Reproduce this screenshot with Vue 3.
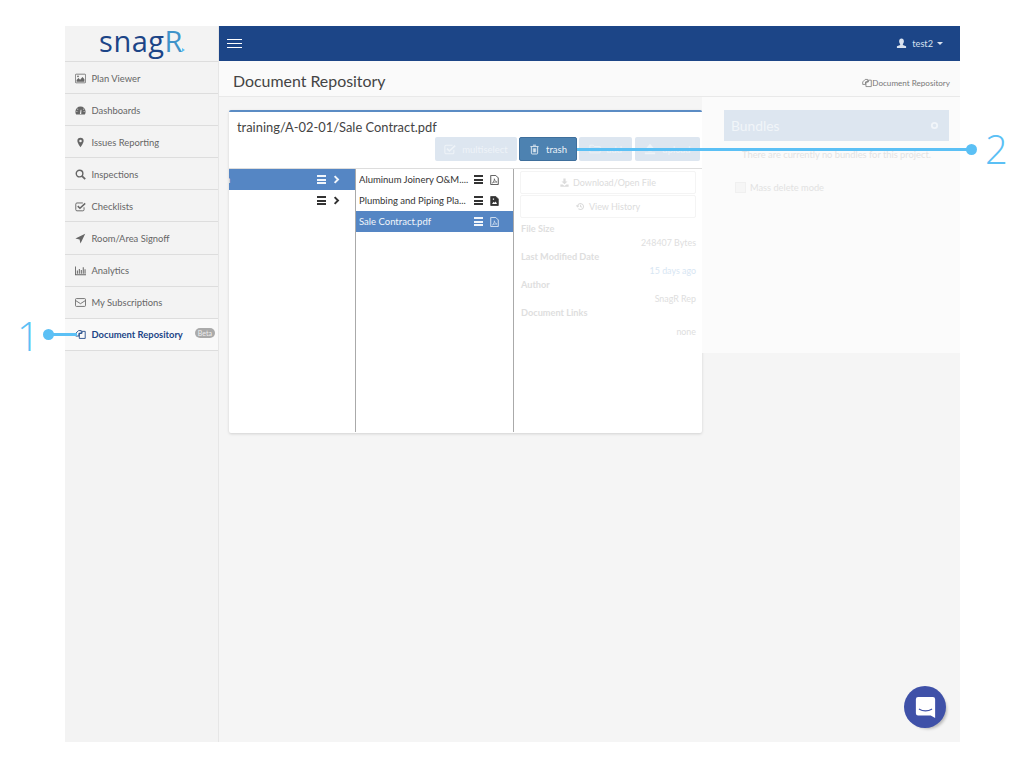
<script setup lang="ts">
const navItems = [
  { label: 'Plan Viewer', icon: 'image' },
  { label: 'Dashboards', icon: 'gauge' },
  { label: 'Issues Reporting', icon: 'pin' },
  { label: 'Inspections', icon: 'search' },
  { label: 'Checklists', icon: 'check' },
  { label: 'Room/Area Signoff', icon: 'arrow' },
  { label: 'Analytics', icon: 'chart' },
  { label: 'My Subscriptions', icon: 'mail' },
  { label: 'Document Repository', icon: 'docs', active: true, badge: 'Beta' },
]

const files = [
  { name: 'Aluminum Joinery O&M....', icon: 'pdf' },
  { name: 'Plumbing and Piping Pla...', icon: 'imgfile' },
  { name: 'Sale Contract.pdf', icon: 'pdf', active: true },
]

const details = [
  { label: 'File Size', value: '248407 Bytes' },
  { label: 'Last Modified Date', value: '15 days ago', recent: true },
  { label: 'Author', value: 'SnagR Rep' },
  { label: 'Document Links', value: 'none' },
]
</script>

<template>
  <div class="page">
    <div class="app">
      <aside class="sidebar">
        <div class="logo"><span class="logo__snag">snag</span><span class="logo__r">R</span><i class="logo__tip" /></div>
        <nav>
          <a v-for="item in navItems" :key="item.label" class="nav-item" :class="{ 'nav-item--active': item.active }">
            <svg class="nav-icon" viewBox="0 0 14 14">
              <g v-if="item.icon === 'image'"><rect x="0.5" y="1.5" width="13" height="11" rx="1" fill="none" stroke="currentColor" /><path d="M2 11V9l2.5-2.5L6.5 8.5 9.5 5 12 8v3z" fill="currentColor" /><circle cx="3.8" cy="4.2" r="1.1" fill="currentColor" /></g>
              <path v-else-if="item.icon === 'gauge'" d="M7 2a6.5 6.5 0 0 0-6.5 6.5c0 1.3.3 2.4 1 3.5h11c.7-1.1 1-2.2 1-3.5A6.5 6.5 0 0 0 7 2zM6.2 11.500l1-5.5 1 .2-.3 5.3zM3 9H1.800V8H3zM4.300 5.500l-1 .7-.6-.9.9-.7zM12.200 9H11V8h1.200zM11.300 6.200l-1-.7.7-.9.9.7z" fill="currentColor" fill-rule="evenodd" />
              <path v-else-if="item.icon === 'pin'" d="M7 1a4 4 0 0 0-4 4c0 2.500 4 8 4 8s4-5.500 4-8a4 4 0 0 0-4-4zm0 5.600A1.600 1.600 0 1 1 7 3.400a1.600 1.600 0 0 1 0 3.200z" fill="currentColor" fill-rule="evenodd" />
              <g v-else-if="item.icon === 'search'" fill="none" stroke="currentColor"><circle cx="5.800" cy="5.800" r="4.200" stroke-width="1.800" /><path d="M9 9l4 4" stroke-width="2.200" /></g>
              <g v-else-if="item.icon === 'check'" fill="none" stroke="currentColor"><path d="M11.500 8v3a1.500 1.500 0 0 1-1.500 1.500H2.500A1.500 1.500 0 0 1 1 11V4a1.500 1.500 0 0 1 1.500-1.500H10" stroke-width="1.200" /><path d="M3.500 6.500L6.300 9.300 13 3" stroke-width="1.900" /></g>
              <path v-else-if="item.icon === 'arrow'" d="M13 1L7 13.500 5.800 8.200.5 7z" fill="currentColor" />
              <path v-else-if="item.icon === 'chart'" d="M.5 2v10.500H14M3 7v4M5.500 5v6M8 6.500V11M10.500 3v8M12.800 5.500V11" fill="none" stroke="currentColor" stroke-width="1.300" />
              <g v-else-if="item.icon === 'mail'" fill="none" stroke="currentColor" stroke-width="1.100"><rect x="0.600" y="2" width="12.800" height="10" rx="1.300" /><path d="M.8 4.500L7 8.500l6.200-4" /></g>
              <g v-else fill="none" stroke="currentColor" stroke-width="1.100"><path d="M1 5.500L4.500 2H8v3.500H5V9H1z" /><path d="M5.500 5.500H9V3h4v9H5.500z" /></g>
            </svg>
            <span class="nav-label">{{ item.label }}</span>
            <em v-if="item.badge" class="nav-badge">{{ item.badge }}</em>
          </a>
        </nav>
      </aside>

      <div class="main">
        <header class="topbar">
          <div class="burger"><i /><i /><i /></div>
          <div class="user">
            <svg class="user__icon" viewBox="0 0 12 12"><path d="M6 .5c1.700 0 2.600 1.300 2.600 3 0 1.200-.5 2.300-1.100 3v1l3.500 1.500v2H1v-2l3.500-1.500v-1c-.6-.7-1.100-1.800-1.100-3 0-1.700.9-3 2.600-3z" fill="currentColor" /></svg>
            <span>test2</span>
            <i class="user__caret" />
          </div>
        </header>

        <div class="subhead">
          <h1>Document Repository</h1>
          <div class="crumb">
            <svg class="crumb__icon" viewBox="0 0 14 14"><g fill="none" stroke="currentColor" stroke-width="1.100"><path d="M1 5.500L4.500 2H8v3.500H5V9H1z" /><path d="M5.500 5.500H9V3h4v9H5.500z" /></g></svg>
            Document Repository
          </div>
        </div>

        <div class="content">
          <section class="browser">
            <div class="browser__head">
              <h2>training/A-02-01/Sale Contract.pdf</h2>
              <div class="toolbar">
                <button class="btn btn--w82" type="button">
                  <svg class="btn__icon" viewBox="0 0 14 14"><g fill="none" stroke="currentColor"><path d="M11.500 8v3a1.500 1.500 0 0 1-1.500 1.500H2.500A1.500 1.500 0 0 1 1 11V4a1.500 1.500 0 0 1 1.500-1.500H10" stroke-width="1.200" /><path d="M3.500 6.500L6.300 9.300 13 3" stroke-width="1.900" /></g></svg>
                  multiselect
                </button>
                <button class="btn btn--trash" type="button">
                  <svg class="btn__icon btn__icon--small" viewBox="0 0 14 14"><path d="M5 1.500h4M1.800 3.300h10.400M3 3.500v8.200c0 .7.400 1 1 1h6c.6 0 1-.3 1-1V3.500M5.500 5.500v5M7 5.500v5M8.500 5.500v5" fill="none" stroke="currentColor" stroke-width="1.100" /></svg>
                  trash
                </button>
                <button class="btn btn--w53" type="button">
                  <svg class="btn__icon" viewBox="0 0 14 14"><path d="M1 11.500v-9h4l1.300 1.500H13v7.500z" fill="none" stroke="currentColor" /></svg>
                  add
                </button>
                <button class="btn btn--w65" type="button">
                  <svg class="btn__icon" viewBox="0 0 14 14"><path d="M7 1L2.500 6H5v4h4V6h2.500zM1 11h12v2H1z" fill="currentColor" /></svg>
                  upload
                </button>
              </div>
            </div>

            <div class="columns">
              <div class="col col--folders">
                <div class="row row--active">
                  <span class="row__name row__name--clip">n</span>
                  <span class="lines"><i /><i /><i /></span>
                  <svg class="chev" viewBox="0 0 8 12"><path d="M1.500 1.500L6 6l-4.500 4.500" fill="none" stroke="currentColor" stroke-width="2.600" /></svg>
                </div>
                <div class="row">
                  <span class="row__name" />
                  <span class="lines"><i /><i /><i /></span>
                  <svg class="chev" viewBox="0 0 8 12"><path d="M1.500 1.500L6 6l-4.500 4.500" fill="none" stroke="currentColor" stroke-width="2.600" /></svg>
                </div>
              </div>

              <div class="col col--files">
                <div v-for="file in files" :key="file.name" class="row row--file" :class="{ 'row--active': file.active }">
                  <span class="row__name">{{ file.name }}</span>
                  <span class="lines"><i /><i /><i /></span>
                  <svg class="file-icon" viewBox="0 0 10 12">
                    <path d="M1 .5h5.500L9.500 3.500v8H.5V.5z" :fill="file.icon === 'imgfile' ? 'currentColor' : 'none'" stroke="currentColor" />
                    <path v-if="file.icon === 'pdf'" d="M2.500 9.500C4 8.500 5 6 4.800 4.500c.5 2 1.500 3.500 3 4-1.500-.2-3.500 0-5.300 1z" fill="none" stroke="currentColor" stroke-width="0.700" />
                    <path v-else d="M2 9.500l2-2.500 1.300 1.200L6.500 6.500 8 9.500zM3 3h1.500v1.500H3z" fill="#fff" />
                  </svg>
                </div>
              </div>

              <div class="col col--detail">
                <div class="ghost-btn">
                  <svg class="ghost-icon" viewBox="0 0 12 12"><path d="M4.500 .5h3v4H10L6 8.300 2 4.500h2.500zM.5 8.500h3L6 10.500l2.500-2h3v3H.5z" fill="currentColor" /></svg>
                  Download/Open File
                </div>
                <div class="ghost-btn">
                  <svg class="ghost-icon" viewBox="0 0 12 12"><path d="M2 6a4 4 0 1 1 1.200 2.900M6 3.500V6l1.800 1M.5 4.500L2 6.300 3.800 5" fill="none" stroke="currentColor" stroke-width="1.400" /></svg>
                  View History
                </div>
                <dl class="meta">
                  <template v-for="d in details" :key="d.label">
                    <dt>{{ d.label }}</dt>
                    <dd :class="{ recent: d.recent }">{{ d.value }}</dd>
                  </template>
                </dl>
              </div>
            </div>
          </section>

          <section class="bundles">
            <div class="bundles__head">
              <span>Bundles</span>
              <svg class="bundles__plus" viewBox="0 0 10 10"><circle cx="5" cy="5" r="3" fill="none" stroke="currentColor" stroke-width="2" /></svg>
            </div>
            <p class="bundles__empty">There are currently no bundles for this project.</p>
            <label class="mass"><i class="mass__box" />Mass delete mode</label>
          </section>
        </div>
      </div>
    </div>

    <div class="callout callout--one">
      <span class="callout__num">1</span><i class="callout__dot" /><i class="callout__line" />
    </div>
    <div class="callout callout--two">
      <i class="callout__line" /><i class="callout__dot" /><span class="callout__num">2</span>
    </div>

    <div class="chat">
      <svg viewBox="0 0 24 26"><path d="M3.500 1h17A2.500 2.500 0 0 1 23 3.500V25l-5-3H3.500A2.500 2.500 0 0 1 1 19.500v-16A2.500 2.500 0 0 1 3.500 1z" fill="#fff" /><path d="M5 15c4 2.500 10 2.500 14 0" fill="none" stroke="#3f51a8" stroke-width="1.400" stroke-linecap="round" /></svg>
    </div>
  </div>
</template>

<style>
body {
  background: #fff;
}
</style>

<style scoped>
.page {
  position: relative;
  width: 1024px;
  height: 768px;
  overflow: hidden;
  padding: 26px 64px 26px 65px;
  box-sizing: border-box;
  font-family: Lato, "Noto Sans", sans-serif;
  color: #555;
}

.app {
  display: flex;
  height: 716px;
  background: #f5f5f5;
}

.sidebar {
  width: 154px;
  flex: none;
  background: #f3f3f3;
  border-right: 1px solid #e6e6e6;
  box-sizing: border-box;
}

.logo {
  display: flex;
  justify-content: center;
  align-items: baseline;
  height: 36px;
  padding-left: 1px;
  border-bottom: 1px solid #ddd;
  box-sizing: border-box;
  font-family: "Open Sans", sans-serif;
  font-size: 29px;
  line-height: 30px;
  letter-spacing: 0.5px;
}

.logo__snag {
  color: #1c4587;
}

.logo__r {
  color: #3f93c9;
}

.logo__tip {
  width: 0;
  height: 0;
  margin: 0 0 9px -1px;
  border-left: 3px solid #5bc0f5;
  border-top: 2px solid transparent;
  border-bottom: 2px solid transparent;
}

.nav-item {
  display: flex;
  align-items: center;
  height: 32.1px;
  padding: 1px 0 0 10px;
  box-sizing: border-box;
  border-bottom: 1px solid #ddd;
  font-size: 9.4px;
  color: #666;
}

.nav-item--active {
  background: #f9f9f9;
  color: #1c4587;
  font-weight: 700;
}

.nav-label {
  white-space: nowrap;
}

.nav-icon {
  width: 11px;
  height: 11px;
  margin-right: 5.5px;
  flex: none;
}

.nav-badge {
  margin-left: auto;
  margin-right: 3px;
  margin-top: -4px;
  padding: 0 3px;
  border-radius: 6px;
  background: #aaa;
  color: #eee;
  font-style: normal;
  font-weight: 400;
  font-size: 7px;
  line-height: 10px;
}

.main {
  flex: 1;
  display: flex;
  flex-direction: column;
}

.topbar {
  display: flex;
  align-items: center;
  justify-content: space-between;
  height: 35px;
  padding: 0 17px 0 8px;
  flex: none;
  background: #1c4587;
  color: #d9e2ef;
}

.burger {
  display: flex;
  flex-direction: column;
  gap: 2.5px;
  width: 15px;
}

.burger i {
  height: 1.5px;
  background: #fff;
}

.user {
  display: flex;
  align-items: center;
  font-size: 9.2px;
}

.user__icon {
  width: 11px;
  height: 11px;
  margin-right: 5px;
}

.user__caret {
  margin-left: 4px;
  border-top: 3px solid #d9e2ef;
  border-left: 3px solid transparent;
  border-right: 3px solid transparent;
}

.subhead {
  display: flex;
  align-items: center;
  justify-content: space-between;
  height: 36px;
  padding: 3px 10px 0 14px;
  flex: none;
  box-sizing: border-box;
  background: #fafafa;
  border-bottom: 1px solid #e9e9e9;
}

.subhead h1 {
  margin: 0;
  font-size: 15.9px;
  font-weight: 400;
  color: #444;
}

.crumb {
  display: flex;
  align-items: center;
  margin-top: 5px;
  font-size: 8.1px;
  color: #777;
}

.crumb__icon {
  width: 10px;
  height: 10px;
}

.content {
  display: flex;
  align-items: flex-start;
  padding-left: 10px;
  flex: 1;
}

.browser {
  width: 473px;
  height: 323px;
  margin-top: 13px;
  flex: none;
  box-sizing: border-box;
  background: #fff;
  border-top: 2px solid #5b8cc4;
  border-radius: 2px;
  box-shadow: 0 1px 3px rgba(0, 0, 0, 0.15);
}

.browser__head {
  height: 57px;
  padding: 6px 2px 0 8px;
  box-sizing: border-box;
  border-bottom: 1px solid #ddd;
}

.browser__head h2 {
  margin: 0;
  font-size: 12.9px;
  line-height: 18px;
  font-weight: 400;
  color: #444;
}

.toolbar {
  display: flex;
  justify-content: flex-end;
  gap: 2px;
  margin-top: 1px;
}

.btn {
  display: flex;
  align-items: center;
  justify-content: center;
  gap: 6px;
  height: 24px;
  padding: 0;
  border: 0;
  border-radius: 2px;
  background: #dde6f0;
  color: #eef3f8;
  font-family: inherit;
  font-size: 9.5px;
}

.btn--w82 {
  width: 82px;
}

.btn--w53 {
  width: 53px;
}

.btn--w65 {
  width: 65px;
  margin-left: 1px;
}

.btn--trash {
  width: 58px;
  background: #4d82b1;
  border: 1px solid #3f6f9c;
  color: #eef3f8;
}

.btn__icon {
  width: 12px;
  height: 12px;
}

.btn__icon--small {
  width: 11px;
  height: 11px;
}

.columns {
  display: flex;
  height: 263px;
}

.col--folders {
  width: 126px;
  flex: none;
  border-right: 1px solid #aaa;
}

.col--files {
  width: 157px;
  flex: none;
  border-right: 1px solid #aaa;
}

.col--detail {
  flex: 1;
  padding: 2px 6px 0 7px;
}

.row {
  display: flex;
  align-items: center;
  height: 21px;
  padding-right: 15px;
  color: #333;
  font-size: 9.5px;
}

.row--file {
  padding: 0 14px 0 3px;
}

.row--active {
  background: #5586c4;
  color: #f2f6fb;
}

.row__name {
  flex: 1;
  min-width: 0;
  padding-bottom: 1px;
  overflow: hidden;
  white-space: nowrap;
}

.row__name--clip {
  text-indent: -4px;
}

.lines {
  display: flex;
  flex-direction: column;
  gap: 1.5px;
  width: 9px;
  margin-left: 4px;
  flex: none;
}

.lines i {
  height: 2px;
  background: currentColor;
}

.chev {
  width: 7px;
  height: 9px;
  margin-left: 7px;
  flex: none;
}

.file-icon {
  width: 9px;
  height: 10px;
  margin-left: 7px;
  flex: none;
}

.ghost-btn {
  display: flex;
  align-items: center;
  justify-content: center;
  gap: 4px;
  height: 23px;
  margin-bottom: 1px;
  margin-left: -1px;
  border: 1px solid #f4f4f4;
  border-radius: 2px;
  box-sizing: border-box;
  color: #dcdcdc;
  font-size: 9px;
}

.ghost-icon {
  width: 9px;
  height: 9px;
}

.meta {
  margin: 4px 0 0;
  font-size: 9.2px;
  line-height: 14px;
  color: #dedede;
}

.meta dt {
  font-weight: 700;
}

.meta dd {
  margin: 0;
  font-size: 8.9px;
  text-align: right;
}

.meta dd:last-child {
  margin-top: 5px;
}

.meta dd.recent {
  color: #d7e6f3;
}

.bundles {
  flex: 1;
  height: 256px;
  padding: 13px 11px 0 22px;
  box-sizing: border-box;
  background: #fbfbfb;
}

.bundles__head {
  display: flex;
  align-items: center;
  justify-content: space-between;
  height: 31px;
  padding: 0 10px 0 7px;
  box-sizing: border-box;
  background: #dde6f0;
  color: #f1f5f9;
  font-size: 13.8px;
}

.bundles__plus {
  width: 9px;
  height: 9px;
}

.bundles__empty {
  margin: 8px 0 0;
  font-size: 9.3px;
  color: #e3e3e3;
  text-align: center;
}

.mass {
  display: flex;
  align-items: center;
  gap: 4px;
  margin: 22px 0 0 11px;
  color: #e2e2e2;
  font-size: 9.25px;
}

.mass__box {
  width: 9px;
  height: 9px;
  border: 1px solid #f0f0f0;
  background: #f6f6f6;
}

.callout {
  position: absolute;
  display: flex;
  align-items: center;
  color: #5bc0f5;
}

.callout__num {
  font-family: "Open Sans", sans-serif;
  font-weight: 300;
  font-size: 40px;
  line-height: 40px;
}

.callout__dot {
  width: 11px;
  height: 11px;
  flex: none;
  border-radius: 50%;
  background: #5bc0f5;
}

.callout__line {
  height: 3px;
  flex: none;
  background: #5bc0f5;
}

.callout--one {
  left: 17px;
  top: 314px;
}

.callout--one .callout__num {
  position: relative;
  top: 2px;
}

.callout--one .callout__dot {
  margin-left: 3px;
}

.callout--one .callout__line {
  width: 25px;
  margin-left: -2px;
}

.callout--two {
  left: 577px;
  top: 129px;
}

.callout--two .callout__line {
  width: 392px;
}

.callout--two .callout__dot {
  margin-left: -3px;
}

.callout--two .callout__num {
  margin-left: 8px;
}

.chat {
  position: absolute;
  left: 904px;
  top: 686px;
  display: flex;
  align-items: center;
  justify-content: center;
  width: 42px;
  height: 42px;
  border-radius: 50%;
  background: #3f51a8;
  box-shadow: 3px 3px 3px -2px rgba(0, 0, 0, 0.25);
}

.chat svg {
  width: 21px;
  height: 23px;
}
</style>
